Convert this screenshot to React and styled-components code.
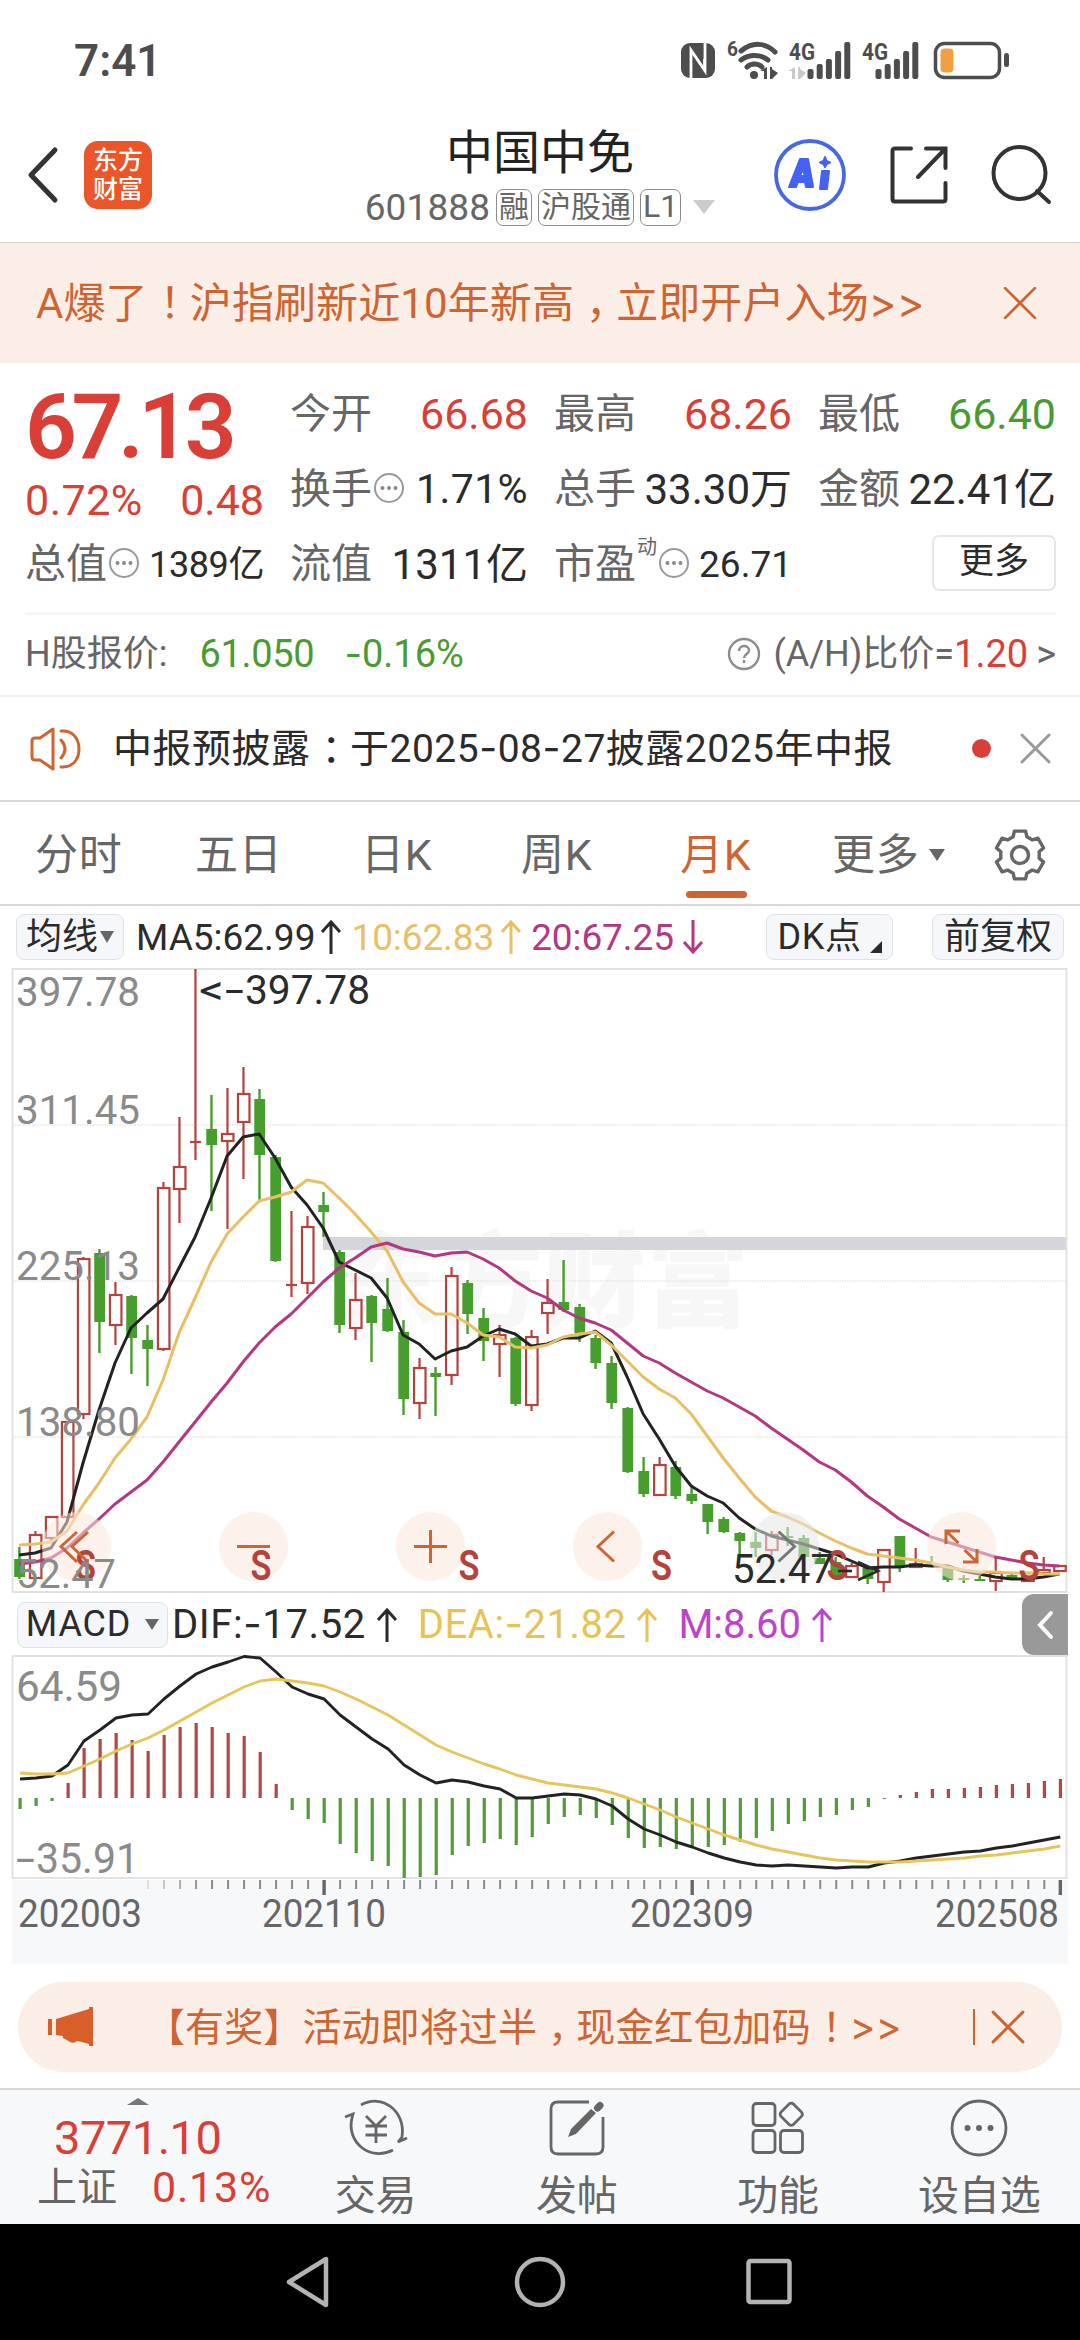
import React from "react";
import styled, { createGlobalStyle } from "styled-components";

const RED = "#d93f36";
const GREEN = "#4a9a33";
const ORANGE = "#cf6433";
const GRAY = "#666666";
const DARK = "#2b2b2b";
const MA_YELLOW = "#e9bf66";
const MA_PURPLE = "#b3387f";

const GlobalStyle = createGlobalStyle`
  * {
    box-sizing: border-box;
  }
  body {
    margin: 0;
    background: #ffffff;
    font-family: Roboto, "Noto Sans CJK SC", sans-serif;
    line-height: 1;
  }
  svg {
    display: block;
    flex-shrink: 0;
    overflow: visible;
  }
`;

const Page = styled.div`
  width: 1080px;
  height: 2340px;
  display: flex;
  flex-direction: column;
  overflow: hidden;
  white-space: nowrap;
`;

/* Shared text pieces */

const Text = styled.span`
  font-size: ${(props) => props.$size || 40}px;
  font-weight: ${(props) => props.$weight || 400};
  color: ${(props) => props.$color || DARK};
  letter-spacing: ${(props) => props.$ls || 0}px;
  margin-left: ${(props) => props.$ml || 0}px;
`;

// Full width punctuation sits in the middle of its cell
const Punct = styled.span`
  margin-left: 0.28em;
  margin-right: -0.28em;
`;

// Inter has the wider dash and angle signs
const Wide = styled.span`
  font-family: Inter, sans-serif;
`;

/* Status bar */

const StatusBar = styled.header`
  height: 104px;
  padding: 18px 70px 0 74px;
  display: flex;
  align-items: center;
  justify-content: space-between;
`;

const StatusIcons = () => (
  <svg width="330" height="44" viewBox="680 38 330 44" fill="#4d4d4d">
    <rect x="681" y="42" width="34" height="35" rx="9" />
    <path d="M691 77V49L704.500 69V58M705 42V70L691.500 50" fill="none" stroke="#fff" strokeWidth="2.800" />
    <text x="727" y="55" fontSize="21" fontWeight="700" textLength="11" lengthAdjust="spacingAndGlyphs">6</text>
    <g fill="none" stroke="#4d4d4d" strokeWidth="5" strokeLinecap="round">
      <path d="M741 50C752 41 765 41 775 51" />
      <path d="M741 59C749 53 761 53 768 59" />
      <path d="M747 66C751 62 758 62 762 66" />
    </g>
    <circle cx="754" cy="74" r="4" />
    <path d="M760 70L767 66V78H764V70ZM770 66H772V68L778 72L772 78H770Z" />
    <text x="789" y="59" fontSize="23" fontWeight="700" textLength="26" lengthAdjust="spacingAndGlyphs">4G</text>
    <path d="M788 70L795 66V78H792V70ZM798 66H800V68L806 72L800 78H798Z" fill="#c9c9c9" />
    {[68, 63, 58, 50, 41].map((y, i) => (
      <rect key={y} x={807.5 + i * 9.2} y={y} width="6" height={78 - y} rx="2" />
    ))}
    <text x="862" y="59" fontSize="23" fontWeight="700" textLength="26" lengthAdjust="spacingAndGlyphs">4G</text>
    {[68, 63, 58, 50, 41].map((y, i) => (
      <rect key={y} x={875.5 + i * 9.2} y={y} width="6" height={78 - y} rx="2" />
    ))}
    <rect x="935.5" y="42.5" width="64" height="34" rx="9" fill="none" stroke="#4d4d4d" strokeWidth="3.5" />
    <rect x="940.5" y="47.5" width="13" height="24" rx="4" fill="#f0a040" />
    <rect x="1004" y="52" width="5" height="14" rx="2.5" />
  </svg>
);

/* Title bar */

const TitleBar = styled.div`
  height: 139px;
  border-bottom: 1px solid #d4d4d4;
  padding: 4px 27px 0;
  display: grid;
  grid-template-columns: 300px 1fr 300px;
  align-items: center;
`;

const TitleLeft = styled.div`
  display: flex;
  align-items: center;
  gap: 26px;
`;

const TitleRight = styled.div`
  display: flex;
  align-items: center;
  justify-content: flex-end;
  gap: 41px;
  padding-right: 1px;
`;

const AppLogo = styled.div`
  width: 68px;
  height: 68px;
  border-radius: 14px;
  background: #ea5529;
  color: #ffffff;
  font-size: 25px;
  font-weight: 500;
  line-height: 29px;
  text-align: center;
  padding-top: 5px;
  white-space: normal;
`;

const StockTitle = styled.div`
  display: flex;
  flex-direction: column;
  align-items: center;
  gap: 13px;
  padding-top: 4px;
`;

const StockCode = styled.div`
  display: flex;
  align-items: center;
`;

const Tag = styled.span`
  height: 37px;
  margin-left: 6px;
  padding: 0 ${(props) => props.$pad || 2}px;
  border: 1.5px solid #8c8c8c;
  border-radius: 7px;
  color: ${GRAY};
  font-size: ${(props) => props.$size || 30}px;
  line-height: 33px;
`;

const TriangleDown = styled.span`
  width: 0;
  height: 0;
  border-left: ${(props) => props.$w}px solid transparent;
  border-right: ${(props) => props.$w}px solid transparent;
  border-top: ${(props) => props.$h}px solid ${(props) => props.$color};
  margin-left: ${(props) => props.$gap || 0}px;
`;

const CloseIcon = ({ size, color, width }) => (
  <svg width={size} height={size} viewBox="0 0 32 32">
    <path d="M2 2L30 30M30 2L2 30" stroke={color} strokeWidth={width} strokeLinecap="round" />
  </svg>
);

/* Account banner */

const Banner = styled.div`
  height: 120px;
  background: #fbeee6;
  padding: 0 43px 0 36px;
  display: flex;
  align-items: center;
  justify-content: space-between;
`;

/* Quote */

const Quote = styled.section`
  height: 334px;
  padding: 14px 24px 0 25px;
  border-bottom: 2px solid #efefef;
`;

const QuoteGrid = styled.div`
  display: grid;
  grid-template-columns: 239px repeat(3, 238px);
  grid-auto-rows: 75px;
  column-gap: 26px;
`;

const PriceBlock = styled.div`
  grid-row: span 2;
  display: flex;
  flex-direction: column;
  padding-top: 5px;
`;

const Price = styled.div`
  color: ${RED};
  font-size: 91px;
  font-weight: 600;
  letter-spacing: -5.5px;
  line-height: 90px;
`;

const PriceChange = styled.div`
  display: flex;
  justify-content: space-between;
  margin-top: 7px;
`;

const Cell = styled.div`
  display: flex;
  align-items: center;
  justify-content: space-between;
`;

const CellLabel = styled.div`
  display: flex;
  align-items: center;
  gap: 1px;
  color: ${GRAY};
  font-size: 41px;
`;

const Sup = styled.sup`
  font-size: 20px;
  align-self: flex-start;
  margin-top: -7px;
  line-height: 20px;
`;

const MoreButton = styled.button`
  width: 124px;
  height: 56px;
  margin: -3px 0 0 auto;
  padding: 0 0 3px;
  border: 2px solid #e6e6e6;
  border-radius: 7px;
  background: #ffffff;
  color: ${DARK};
  font: 400 35px/1 Roboto, "Noto Sans CJK SC", sans-serif;
`;

const HShareRow = styled.div`
  height: 80px;
  margin-top: 10px;
  border-top: 3px solid #f5f5f5;
  display: flex;
  align-items: center;
`;

const Ratio = styled.div`
  margin-left: auto;
  display: flex;
  align-items: center;
`;

const InfoDots = () => (
  <svg width="32" height="32" viewBox="0 0 32 32">
    <circle cx="16" cy="14" r="14" fill="none" stroke="#999" strokeWidth="2" />
    <circle cx="9.5" cy="14" r="2" fill="#888" />
    <circle cx="16" cy="14" r="2" fill="#888" />
    <circle cx="22.5" cy="14" r="2" fill="#888" />
  </svg>
);

/* Notice */

const Notice = styled.div`
  height: 105px;
  padding: 0 29px 0 30px;
  border-bottom: 2px solid #d8d8d8;
  display: flex;
  align-items: center;
`;

const NoticeText = styled(Text)`
  margin-left: 31px;
  flex: 1;
`;

const RedDot = styled.span`
  width: 19px;
  height: 19px;
  margin-right: 29px;
  border-radius: 50%;
  background: ${RED};
`;

/* Period tabs */

const Tabs = styled.nav`
  height: 104px;
  border-bottom: 2px solid #d8d8d8;
  padding: 0 35px;
  display: grid;
  grid-template-columns: 160px 166px 160px 159px 152px 1fr 51px;
`;

const Tab = styled.div`
  position: relative;
  display: flex;
  align-items: center;
  padding-top: 4px;
  color: ${(props) => (props.$active ? ORANGE : GRAY)};
  font-size: 43px;
  letter-spacing: 0.8px;
`;

const ActiveBar = styled.span`
  position: absolute;
  left: 6px;
  bottom: 6px;
  width: 61px;
  height: 7px;
  border-radius: 4px;
  background: ${ORANGE};
`;

/* Indicator rows */

const IndicatorRow = styled.div`
  height: ${(props) => props.$height}px;
  padding-left: ${(props) => props.$left}px;
  padding-right: ${(props) => props.$right}px;
  display: flex;
  align-items: center;
`;

const PillButton = styled.div`
  width: ${(props) => props.$width}px;
  height: 46px;
  margin-left: ${(props) => props.$ml || 0}px;
  flex-shrink: 0;
  border: 1.5px solid #e0e2e5;
  border-radius: 8px;
  background: #f6f7fa;
  color: ${DARK};
  font-size: 36px;
  letter-spacing: ${(props) => props.$ls || 0}px;
  display: flex;
  align-items: center;
  justify-content: center;
  padding-bottom: 1px;
`;

const Corner = styled.span`
  width: 0;
  height: 0;
  align-self: flex-end;
  margin: 0 0 5px 8px;
  border-left: 12px solid transparent;
  border-bottom: 12px solid ${DARK};
`;

const MaValue = styled.div`
  display: flex;
  align-items: center;
  gap: ${(props) => props.$gap}px;
  margin-left: ${(props) => props.$left}px;
  color: ${(props) => props.$color};
  font-size: ${(props) => props.$size}px;
  letter-spacing: ${(props) => props.$ls || 0}px;
`;

const Spacer = styled.div`
  flex: 1;
`;

const Arrow = ({ down }) => (
  <svg width="22" height="34" viewBox="0 0 22 34" fill="none" stroke="currentColor" strokeWidth="3">
    {down ? <path d="M11 0V32M2 22L11 32L20 22" /> : <path d="M11 34V2M2 12L11 2L20 12" />}
  </svg>
);

const CollapseTab = styled.div`
  width: 46px;
  height: 61px;
  border-radius: 12px 0 0 12px;
  background: #999999;
  display: flex;
  align-items: center;
  justify-content: center;
`;

/* Chart data: [up, high, body top, body bottom, low] */

const candles = [
  [0, 1547, 1559, 1577, 1579], [1, 1531, 1535, 1578, 1578], [1, 1517, 1517, 1538, 1541],
  [1, 1422, 1422, 1517, 1517], [1, 1257, 1259, 1414, 1419], [0, 1249, 1253, 1322, 1353],
  [1, 1282, 1295, 1325, 1345], [0, 1295, 1296, 1338, 1374], [0, 1325, 1340, 1349, 1386],
  [1, 1182, 1188, 1349, 1351], [1, 1117, 1167, 1189, 1223], [1, 969, 1142, 1142, 1160],
  [0, 1095, 1129, 1145, 1211], [1, 1088, 1134, 1141, 1229], [1, 1067, 1094, 1122, 1179],
  [0, 1089, 1099, 1155, 1201], [0, 1155, 1157, 1261, 1262], [1, 1211, 1285, 1285, 1297],
  [1, 1216, 1227, 1283, 1294], [0, 1192, 1205, 1212, 1237], [0, 1250, 1252, 1325, 1333],
  [1, 1273, 1300, 1328, 1340], [0, 1295, 1296, 1323, 1362], [0, 1278, 1309, 1331, 1332],
  [0, 1320, 1332, 1399, 1415], [1, 1358, 1368, 1403, 1419], [0, 1367, 1373, 1377, 1416],
  [1, 1267, 1276, 1375, 1385], [0, 1280, 1283, 1314, 1334], [0, 1308, 1318, 1341, 1361],
  [1, 1325, 1335, 1344, 1377], [0, 1337, 1338, 1404, 1406], [1, 1330, 1337, 1405, 1411],
  [1, 1279, 1303, 1313, 1334], [0, 1260, 1302, 1310, 1312], [0, 1304, 1307, 1333, 1342],
  [0, 1335, 1338, 1363, 1369], [0, 1356, 1363, 1403, 1409], [0, 1407, 1408, 1472, 1473],
  [0, 1457, 1471, 1494, 1497], [1, 1457, 1465, 1495, 1496], [0, 1461, 1467, 1496, 1499],
  [0, 1485, 1494, 1501, 1504], [0, 1504, 1504, 1522, 1534], [0, 1517, 1519, 1532, 1533],
  [0, 1532, 1533, 1541, 1555], [0, 1532, 1542, 1548, 1557], [1, 1531, 1535, 1550, 1555],
  [0, 1527, 1536, 1538, 1546], [0, 1535, 1538, 1557, 1558], [0, 1552, 1558, 1564, 1564],
  [0, 1557, 1562, 1576, 1576], [1, 1563, 1566, 1577, 1577], [0, 1567, 1568, 1579, 1584],
  [1, 1550, 1550, 1582, 1592], [0, 1536, 1536, 1566, 1572], [1, 1548, 1564, 1567, 1568],
  [0, 1556, 1565, 1567, 1567], [0, 1568, 1568, 1580, 1582], [0, 1575, 1578, 1580, 1583],
  [0, 1576, 1579, 1581, 1581], [1, 1557, 1573, 1581, 1591], [0, 1574, 1575, 1578, 1579],
  [1, 1572, 1573, 1581, 1582], [1, 1557, 1570, 1573, 1573], [1, 1565, 1566, 1571, 1571],
];

const ma5 = [
  1555, 1553, 1548, 1522, 1463, 1410, 1363, 1328, 1313, 1299, 1268, 1237, 1198, 1156, 1137, 1134, 1158,
  1187, 1205, 1228, 1262, 1270, 1278, 1298, 1335, 1344, 1359, 1351, 1347, 1336, 1329, 1334, 1346, 1344,
  1338, 1338, 1331, 1343, 1377, 1414, 1439, 1466, 1486, 1496, 1503, 1518, 1529, 1536, 1540, 1544, 1549,
  1554, 1561, 1568, 1567, 1567, 1565, 1566, 1566, 1571, 1574, 1577, 1579, 1579, 1577, 1574,
];

const ma10 = [
  1545, 1544, 1542, 1531, 1505, 1483, 1458, 1439, 1417, 1380, 1333, 1298, 1262, 1234, 1217, 1201, 1197,
  1192, 1180, 1183, 1198, 1214, 1232, 1251, 1282, 1303, 1314, 1314, 1323, 1335, 1337, 1347, 1348, 1345,
  1337, 1334, 1332, 1345, 1361, 1377, 1389, 1398, 1414, 1436, 1458, 1478, 1497, 1511, 1517, 1524, 1533,
  1541, 1548, 1554, 1556, 1558, 1560, 1563, 1567, 1570, 1572, 1572, 1573, 1573, 1574, 1574,
];

const ma20 = [
  1564, 1562, 1558, 1548, 1533, 1519, 1504, 1492, 1480, 1462, 1442, 1422, 1402, 1383, 1362, 1343, 1327,
  1314, 1298, 1282, 1268, 1258, 1247, 1243, 1249, 1252, 1256, 1253, 1252, 1259, 1268, 1281, 1291, 1298,
  1310, 1318, 1323, 1330, 1343, 1356, 1363, 1373, 1382, 1391, 1398, 1407, 1416, 1428, 1439, 1450, 1462,
  1470, 1482, 1496, 1507, 1519, 1528, 1537, 1542, 1547, 1552, 1557, 1560, 1563, 1565, 1566,
];

const macdBars = [
  1809, 1806, 1801, 1783, 1748, 1739, 1733, 1740, 1751, 1735, 1727, 1723, 1727, 1733, 1736, 1752, 1784,
  1810, 1819, 1823, 1844, 1853, 1861, 1866, 1878, 1877, 1875, 1855, 1846, 1843, 1839, 1845, 1837, 1824,
  1817, 1815, 1818, 1825, 1838, 1848, 1847, 1849, 1848, 1847, 1845, 1842, 1838, 1831, 1824, 1821, 1817,
  1815, 1810, 1807, 1799, 1795, 1792, 1789, 1789, 1788, 1787, 1785, 1784, 1783, 1781, 1779,
];

const dif = [
  1779, 1778, 1776, 1765, 1741, 1730, 1718, 1715, 1714, 1699, 1686, 1674, 1667, 1662, 1656.5, 1658, 1672,
  1687, 1694, 1699, 1715, 1727, 1739, 1749, 1765, 1775, 1783, 1780, 1782, 1786, 1789, 1798, 1798, 1796,
  1794, 1795, 1799, 1806, 1819, 1829, 1835, 1842, 1847, 1853, 1858, 1862, 1865, 1866, 1865, 1866, 1867,
  1868, 1867, 1867, 1863, 1861, 1858, 1856, 1854, 1852, 1851, 1848, 1846, 1843, 1840, 1837,
];

const dea = [
  1773, 1774, 1774, 1773, 1766, 1759, 1751, 1744, 1738, 1730, 1721, 1712, 1703, 1695, 1687, 1681, 1679,
  1681, 1683, 1686, 1692, 1699, 1707, 1715, 1725, 1735, 1745, 1752, 1758, 1764, 1769, 1775, 1779, 1783,
  1785, 1787, 1789, 1793, 1798, 1804, 1810, 1817, 1823, 1829, 1835, 1840, 1845, 1849, 1852, 1855, 1858,
  1860, 1861, 1862, 1862, 1862, 1861, 1860, 1859, 1858, 1856, 1855, 1853, 1851, 1849, 1846,
];

const STEP = 16.005;
const ZERO = 1798;
const UP = "#b5433d";
const DOWN = "#479e2f";

const toPoints = (values, start) => values.map((y, i) => `${(start + i * STEP).toFixed(1)},${y}`).join(" ");

const ChartText = styled.text`
  font-family: Roboto, "Noto Sans CJK SC", sans-serif;
  font-size: ${(props) => props.$size || 41}px;
  font-weight: ${(props) => props.$weight || 400};
  fill: ${(props) => props.$fill || "#8a8a8a"};
`;

const Label = ({ x, y, w, children, ...rest }) => (
  <ChartText x={x} y={y} textLength={w} lengthAdjust="spacingAndGlyphs" {...rest}>
    {children}
  </ChartText>
);

const Candle = ({ index, data }) => {
  const [up, high, top, bottom, low] = data;
  const x = 19.4 + index * STEP;
  if (up) {
    const flat = bottom - top < 2;
    return (
      <g stroke={UP} strokeWidth="2.2" fill="none">
        <path d={`M${x} ${high}V${top}M${x} ${bottom}V${low}`} />
        {flat ? <path d={`M${x - 5.5} ${top}H${x + 5.5}`} /> : <rect x={x - 5.5} y={top} width="11.5" height={bottom - top} />}
      </g>
    );
  }
  return (
    <g fill={DOWN}>
      <rect x={x - 1.2} y={high} width="2.4" height={low - high} />
      <rect x={x - 5.2} y={top} width="10.8" height={bottom - top} />
    </g>
  );
};

const PriceChart = () => (
  <svg width="1080" height="626" viewBox="0 968 1080 626">
    <ChartText x="337" y="1319" $size="103" $weight="900" $fill="#f7f7f8">东方财富</ChartText>
    <rect x="323" y="1237" width="744" height="13" fill="#d5d6dc" />
    {[1125, 1281, 1437].map((y) => (
      <path key={y} d={`M12 ${y}H1067`} stroke="#e6e6e6" strokeWidth="1.5" strokeDasharray="1.5 1" />
    ))}
    <rect x="12.5" y="969" width="1054" height="623" fill="none" stroke="#e2e2e2" strokeWidth="2" />
    {candles.map((c, i) => (
      <Candle key={i} index={i} data={c} />
    ))}
    <g fill="none" strokeWidth="3" strokeLinejoin="round">
      <polyline points={toPoints(ma5, 19)} stroke="#222222" />
      <polyline points={toPoints(ma10, 19)} stroke={MA_YELLOW} />
      <polyline points={toPoints(ma20, 19)} stroke={MA_PURPLE} />
    </g>
    <g fill="#f9e6da" fillOpacity="0.55">
      {[76.5, 253.5, 430.5, 607.5, 961.5].map((cx) => (
        <circle key={cx} cx={cx} cy="1546.5" r="34.5" />
      ))}
      <circle cx="784.5" cy="1546.5" r="34.5" fill="#e6e6e6" />
    </g>
    {[75, 250.5, 458.5, 651, 826.5, 1018.5].map((x) => (
      <Label key={x} x={x} y="1580" w="21" $size="43" $weight="600" $fill={UP}>S</Label>
    ))}
    <Label x="16" y="1006" w="124">397.78</Label>
    <Label x="16" y="1124" w="124">311.45</Label>
    <Label x="16" y="1280" w="124">225.13</Label>
    <Label x="16" y="1436" w="124">138.80</Label>
    <Label x="16" y="1588" w="100">52.47</Label>
    <Label x="199" y="1004" w="25" $fill={DARK}>&lt;</Label>
    <Label x="225" y="1004" w="19" $fill={DARK}>-</Label>
    <Label x="245" y="1004" w="125" $fill={DARK}>397.78</Label>
    <Label x="732" y="1583" w="101" $fill={DARK}>52.47</Label>
    <path d="M838 1571H852" stroke={DARK} strokeWidth="2.6" />
    <path d="M858 1562L878 1571L858 1580" stroke={DARK} strokeWidth="2.6" fill="none" />
    <g fill="none" stroke={ORANGE} strokeWidth="3">
      <path d="M77 1532L61 1546.5L77 1562M88 1532L72 1546.5L88 1562" />
      <path d="M237 1546.5H270" />
      <path d="M414 1546.5H447M430.5 1530V1563" />
      <path d="M614 1531.5L598 1546.5L614 1561.5" />
      <path d="M946 1544V1531H960M947 1532L958.5 1543M977 1549V1562H963M976 1561L964.5 1550" />
      <path d="M778.5 1531.5L794.5 1546.5L778.5 1561.5" stroke="#777" />
    </g>
  </svg>
);

const MacdChart = () => (
  <svg width="1080" height="310" viewBox="0 1655 1080 310">
    <rect x="12" y="1880" width="1056" height="84" fill="#f7f8fa" />
    <rect x="12.5" y="1656" width="1054" height="222" fill="none" stroke="#e2e2e2" strokeWidth="2" />
    {macdBars.map((y, i) => (
      <rect
        key={i}
        x={18.5 + i * STEP}
        y={Math.min(y, ZERO)}
        width="3.2"
        height={Math.max(1, Math.abs(y - ZERO))}
        fill={y < ZERO ? "#ad4a44" : "#519a3e"}
      />
    ))}
    <g fill="none" strokeWidth="2.900" strokeLinejoin="round">
      <polyline points={toPoints(dif, 20)} stroke="#222222" />
      <polyline points={toPoints(dea, 20)} stroke="#e6c55c" />
    </g>
    {macdBars.map((_, i) => {
      if (i < 8) return null;
      const major = i === 19 || i === 42 || i === 65;
      return (
        <rect
          key={i}
          x={(major ? 18.3 : 19) + i * STEP}
          y="1880"
          width={major ? 3.4 : 2}
          height={major ? 15 : 9}
          fill={major ? "#666" : "#8a8a8a"}
          opacity={i < 12 ? (i - 7) * 0.22 : 1}
        />
      );
    })}
    <Label x="16" y="1701" w="106" $size="43">64.59</Label>
    <Label x="16" y="1873" w="19" $size="43">-</Label>
    <Label x="36" y="1873" w="103" $size="43">35.91</Label>
    <Label x="18" y="1927" w="124" $size="38" $fill={GRAY}>202003</Label>
    <Label x="262" y="1927" w="124" $size="38" $fill={GRAY}>202110</Label>
    <Label x="630" y="1927" w="124" $size="38" $fill={GRAY}>202309</Label>
    <Label x="935" y="1927" w="124" $size="38" $fill={GRAY}>202508</Label>
  </svg>
);

/* Promo pill */

const PromoWrap = styled.div`
  height: 123px;
  padding: 17px 18px 0;
`;

const Promo = styled.div`
  height: 90px;
  border-radius: 45px;
  background: #fbeee6;
  padding: 0 37px 0 30px;
  display: flex;
  align-items: center;
`;

const PromoText = styled(Text)`
  flex: 1;
  margin-left: 52px;
`;

const PromoRule = styled.span`
  width: 2px;
  height: 36px;
  margin-right: 16px;
  background: ${ORANGE};
`;

/* Bottom bar */

const BottomBar = styled.nav`
  height: 136px;
  border-top: 2px solid #d6d8db;
  background: #f7f8fa;
  display: grid;
  grid-template-columns: 275px repeat(4, 201.25px);
`;

const IndexBlock = styled.div`
  padding: 8px 0 0 37px;
  display: flex;
  flex-direction: column;
`;

const IndexTriangle = styled.span`
  width: 0;
  height: 0;
  margin-left: 90px;
  border-left: 11px solid transparent;
  border-right: 11px solid transparent;
  border-bottom: 7px solid #777;
`;

const IndexValue = styled(Text)`
  margin: 9px 0 0 17px;
`;

const IndexLine = styled.div`
  display: flex;
  align-items: center;
  margin-top: 5px;
  gap: 35px;
`;

const NavItem = styled.div`
  display: flex;
  flex-direction: column;
  align-items: center;
  padding-top: 8px;
  gap: 18px;
  color: ${GRAY};
  font-size: 41px;
`;

const SystemNav = styled.footer`
  height: 116px;
  background: #000000;
  display: flex;
  align-items: center;
  justify-content: center;
  gap: 181px;
`;

const navItems = [
  {
    label: "交易",
    icon: (
      <>
        <path d="M16 6C37 -6 61 12 57 38L53 43L62 39" />
        <path d="M48 51C25 63 1 43 7 19L8 15L0 18" />
        <path d="M21 17L31 27L41 17M20.500 27H42M20.500 36H42M31 26V44" />
      </>
    ),
  },
  {
    label: "发帖",
    icon: (
      <>
        <path d="M43 3H12Q5 3 5 10V48Q5 55 12 55H50Q57 55 57 48V18" />
        <path d="M22 38L25 30L45 10L50 14L30 35Z" fill="#666" stroke="none" />
        <path d="M51.500 9L54 6.500" strokeWidth="7" strokeLinecap="round" />
      </>
    ),
  },
  {
    label: "功能",
    icon: (
      <>
        <rect x="6" y="4.500" width="22" height="22" rx="3.500" />
        <rect x="6" y="31.500" width="22" height="22" rx="3.500" />
        <rect x="33.500" y="31.500" width="22" height="22" rx="3.500" />
        <rect x="35.500" y="6.500" width="17.500" height="17.500" rx="3" transform="rotate(45 44.250 15.250)" />
      </>
    ),
  },
  {
    label: "设自选",
    icon: (
      <>
        <circle cx="31" cy="29" r="27" />
        <g fill="#666" stroke="none">
          <circle cx="19.500" cy="29" r="3" />
          <circle cx="31" cy="29" r="3" />
          <circle cx="42.500" cy="29" r="3" />
        </g>
      </>
    ),
  },
];

// Six teeth around a 52px box
const gearPath = () => {
  const points = [];
  for (let i = 0; i < 6; i += 1) {
    const a = (i * Math.PI) / 3 - Math.PI / 2;
    [[-0.36, 19.5], [-0.23, 24.5], [0.23, 24.5], [0.36, 19.5]].forEach(([d, r]) => {
      points.push(`${(26 + r * Math.cos(a + d)).toFixed(1)} ${(26 + r * Math.sin(a + d)).toFixed(1)}`);
    });
  }
  return `M${points.join("L")}Z`;
};

const App = () => {
  return (
    <>
      <GlobalStyle />
      <Page>
        <StatusBar>
          <Text $size={44} $weight={600} $color="#4d4d4d">7:41</Text>
          <StatusIcons />
        </StatusBar>

        <TitleBar>
          <TitleLeft>
            <svg width="31" height="56" viewBox="0 0 31 56">
              <path d="M28 3L4 28L28 53" fill="none" stroke="#333" strokeWidth="5" strokeLinecap="round" strokeLinejoin="round" />
            </svg>
            <AppLogo>东方<br />财富</AppLogo>
          </TitleLeft>
          <StockTitle>
            <Text $size={47} $color="#222">中国中免</Text>
            <StockCode>
              <Text $size={37} $color={GRAY} $ls={0.1}>601888</Text>
              <Tag>融</Tag>
              <Tag>沪股通</Tag>
              <Tag $size={32}>L1</Tag>
              <TriangleDown $w={11} $h={14} $color="#cccccc" $gap={12} />
            </StockCode>
          </StockTitle>
          <TitleRight>
            <svg width="74" height="74" viewBox="0 0 74 74">
              <circle cx="36" cy="37" r="34" fill="none" stroke="#4866e6" strokeWidth="3.8" />
              <g fill="#4362f2" stroke="#4362f2" strokeWidth="2" strokeLinejoin="round">
                <path fillRule="evenodd" d="M15 49L26 21H34L39 49H32L31 44H24L22 49ZM26 38H30.500L29.500 30Z" />
                <path d="M48 33H55L53 51H46Z" />
                <path d="M51 19L52.500 23L56 24.500L52.500 26L51 29L49.500 26L46 24.500L49.500 23Z" />
              </g>
            </svg>
            <svg width="60" height="60" viewBox="0 0 60 60" fill="none" stroke="#333" strokeWidth="4" strokeLinecap="round">
              <path d="M22 3.500H6Q3.500 3.500 3.500 6V54Q3.500 56.500 6 56.500H54Q56.500 56.500 56.500 54V38" />
              <path d="M37 3.500H56.500V23M56 4L29 32" />
            </svg>
            <svg width="62" height="62" viewBox="0 0 62 62" fill="none" stroke="#333" strokeWidth="4" strokeLinecap="round">
              <circle cx="29.500" cy="29" r="26" />
              <path d="M47 47L59 58" />
            </svg>
          </TitleRight>
        </TitleBar>

        <Banner>
          <Text $size={42} $color={ORANGE} $ls={0.1}>
            A爆了<Punct>！</Punct>沪指刷新近10年新高<Punct>，</Punct>立即开户入场<Wide>&gt;&gt;</Wide>
          </Text>
          <CloseIcon size={34} color={ORANGE} width={2.6} />
        </Banner>

        <Quote>
          <QuoteGrid>
            <PriceBlock>
              <Price>67.13</Price>
              <PriceChange>
                <Text $size={43} $color={RED} $ls={0.5}>0.72%</Text>
                <Text $size={43} $color={RED}>0.48</Text>
              </PriceChange>
            </PriceBlock>
            <Cell>
              <CellLabel>今开</CellLabel>
              <Text $size={43} $color={RED}>66.68</Text>
            </Cell>
            <Cell>
              <CellLabel>最高</CellLabel>
              <Text $size={43} $color={RED}>68.26</Text>
            </Cell>
            <Cell>
              <CellLabel>最低</CellLabel>
              <Text $size={43} $color={GREEN}>66.40</Text>
            </Cell>
            <Cell>
              <CellLabel>换手<InfoDots /></CellLabel>
              <Text $size={41} $ls={0.4}>1.71%</Text>
            </Cell>
            <Cell>
              <CellLabel>总手</CellLabel>
              <Text $size={42}>33.30万</Text>
            </Cell>
            <Cell>
              <CellLabel>金额</CellLabel>
              <Text $size={42}>22.41亿</Text>
            </Cell>
            <Cell>
              <CellLabel>总值<InfoDots /></CellLabel>
              <Text $size={36} $ls={-0.4}>1389亿</Text>
            </Cell>
            <Cell>
              <CellLabel>流值</CellLabel>
              <Text $size={42}>1311亿</Text>
            </Cell>
            <Cell>
              <CellLabel>市盈<Sup>动</Sup><InfoDots /></CellLabel>
              <Text $size={37}>26.71</Text>
            </Cell>
            <Cell>
              <MoreButton>更多</MoreButton>
            </Cell>
          </QuoteGrid>
          <HShareRow>
            <Text $size={36} $color={GRAY}>H股报价:</Text>
            <Text $size={38} $color={GREEN} $ml={32} $ls={-0.3}>61.050</Text>
            <Text $size={38} $color={GREEN} $ml={30}><Wide>-</Wide>0.16%</Text>
            <Ratio>
              <svg width="34" height="34" viewBox="0 0 34 34" fill="none" stroke="#8c8c8c" strokeWidth="2.4">
                <circle cx="17" cy="17" r="15" />
                <path d="M12 14C12 7.500 22 7.500 22 13.500C22 17 17 17 17 21M17 23V26" />
              </svg>
              <Text $size={36} $color={GRAY} $ml={12}>(A/H)比价=</Text>
              <Text $size={38} $color={RED}>1.20</Text>
              <Text $size={38} $color={GRAY} $ml={8}>&gt;</Text>
            </Ratio>
          </HShareRow>
        </Quote>

        <Notice>
          <svg width="52" height="44" viewBox="0 0 52 44" fill="none" stroke={ORANGE} strokeWidth="3" strokeLinejoin="round">
            <path d="M10 11H5Q2 11 2 14V30Q2 33 5 33H10L23 42V2Z" />
            <path d="M31 13Q39 22 31 31M31 4C43 3 49 12 49 22S43 41 31 40" strokeLinecap="round" />
          </svg>
          <NoticeText $size={39} $ls={0.5}>
            中报预披露<Punct>：</Punct>于2025<Wide>-</Wide>08<Wide>-</Wide>27披露2025年中报
          </NoticeText>
          <RedDot />
          <CloseIcon size={31} color="#999999" width={3} />
        </Notice>

        <Tabs>
          <Tab>分时</Tab>
          <Tab>五日</Tab>
          <Tab>日K</Tab>
          <Tab>周K</Tab>
          <Tab $active>
            月K
            <ActiveBar />
          </Tab>
          <Tab>
            更多
            <TriangleDown $w={8} $h={12} $color={GRAY} $gap={9} />
          </Tab>
          <Tab>
            <svg width="52" height="52" viewBox="0 0 52 52" fill="none" stroke={GRAY} strokeWidth="3.4" strokeLinejoin="round">
              <path d={gearPath()} />
              <circle cx="26" cy="26" r="8.500" />
            </svg>
          </Tab>
        </Tabs>

        <IndicatorRow $height={62} $left={16} $right={16}>
          <PillButton $width={108}>
            均线
            <TriangleDown $w={7} $h={12} $color={GRAY} $gap={2} />
          </PillButton>
          <MaValue $left={12} $gap={5} $size={37} $color={DARK}>MA5:62.99<Arrow /></MaValue>
          <MaValue $left={9} $gap={6} $size={37} $ls={-0.1} $color={MA_YELLOW}>10:62.83<Arrow /></MaValue>
          <MaValue $left={9} $gap={8} $size={37} $ls={-0.1} $color={MA_PURPLE}>20:67.25<Arrow down /></MaValue>
          <Spacer />
          <PillButton $width={127} $ls={0.6}>
            DK点
            <Corner />
          </PillButton>
          <PillButton $width={132} $ml={39}>前复权</PillButton>
        </IndicatorRow>

        <PriceChart />

        <IndicatorRow $height={61} $left={17} $right={12}>
          <PillButton $width={151} $ls={0.8}>
            MACD
            <TriangleDown $w={7} $h={11} $color={GRAY} $gap={14} />
          </PillButton>
          <MaValue $left={4} $gap={10} $size={40} $ls={0.6} $color={DARK}>
            <span>DIF:<Wide>-</Wide>17.52</span>
            <Arrow />
          </MaValue>
          <MaValue $left={20} $gap={10} $size={40} $ls={0.5} $color="#e6c356">
            <span>DEA:<Wide>-</Wide>21.82</span>
            <Arrow />
          </MaValue>
          <MaValue $left={20} $gap={10} $size={40} $color="#bd43cc">
            M:8.60
            <Arrow />
          </MaValue>
          <Spacer />
          <CollapseTab>
            <svg width="18" height="30" viewBox="0 0 18 30">
              <path d="M15 3L4 15L15 27" fill="none" stroke="#fff" strokeWidth="4" strokeLinecap="round" />
            </svg>
          </CollapseTab>
        </IndicatorRow>

        <MacdChart />

        <PromoWrap>
          <Promo>
            <svg width="46" height="40" viewBox="0 0 46 40" fill="#d95f2a">
              <rect x="0" y="12" width="4" height="16" />
              <path d="M8 12L41 2V0H45V39H41V37L34 35L29 34Q26 37 22 35L17 32Q14 32 15 29L8 28Z" />
            </svg>
            <PromoText $size={39} $color={ORANGE} $ls={0.1}>
              【有奖】活动即将过半<Punct>，</Punct>现金红包加码<Punct>！</Punct><Wide>&gt;&gt;</Wide>
            </PromoText>
            <PromoRule />
            <CloseIcon size={34} color={ORANGE} width={2.8} />
          </Promo>
        </PromoWrap>

        <BottomBar>
          <IndexBlock>
            <IndexTriangle />
            <IndexValue $size={47} $color={RED} $ls={-0.5}>3771.10</IndexValue>
            <IndexLine>
              <Text $size={40} $color={GRAY}>上证</Text>
              <Text $size={43} $color={RED} $ls={0.8}>0.13%</Text>
            </IndexLine>
          </IndexBlock>
          {navItems.map((item) => (
            <NavItem key={item.label}>
              <svg width="66" height="60" viewBox="-2 -1 66 60" fill="none" stroke="#666" strokeWidth="2.8">
                {item.icon}
              </svg>
              {item.label}
            </NavItem>
          ))}
        </BottomBar>

        <SystemNav>
          <svg width="50" height="54" viewBox="0 0 50 54">
            <path d="M42 4V50L5 27Z" fill="none" stroke="#b3b3b3" strokeWidth="4.500" strokeLinejoin="round" />
          </svg>
          <svg width="50" height="54" viewBox="0 0 50 54">
            <circle cx="25" cy="27" r="23" fill="none" stroke="#b3b3b3" strokeWidth="4.500" />
          </svg>
          <svg width="50" height="54" viewBox="0 0 50 54">
            <rect x="2.500" y="6" width="41" height="41" rx="2" fill="none" stroke="#b3b3b3" strokeWidth="4.500" />
          </svg>
        </SystemNav>
      </Page>
    </>
  );
};

export default App;
